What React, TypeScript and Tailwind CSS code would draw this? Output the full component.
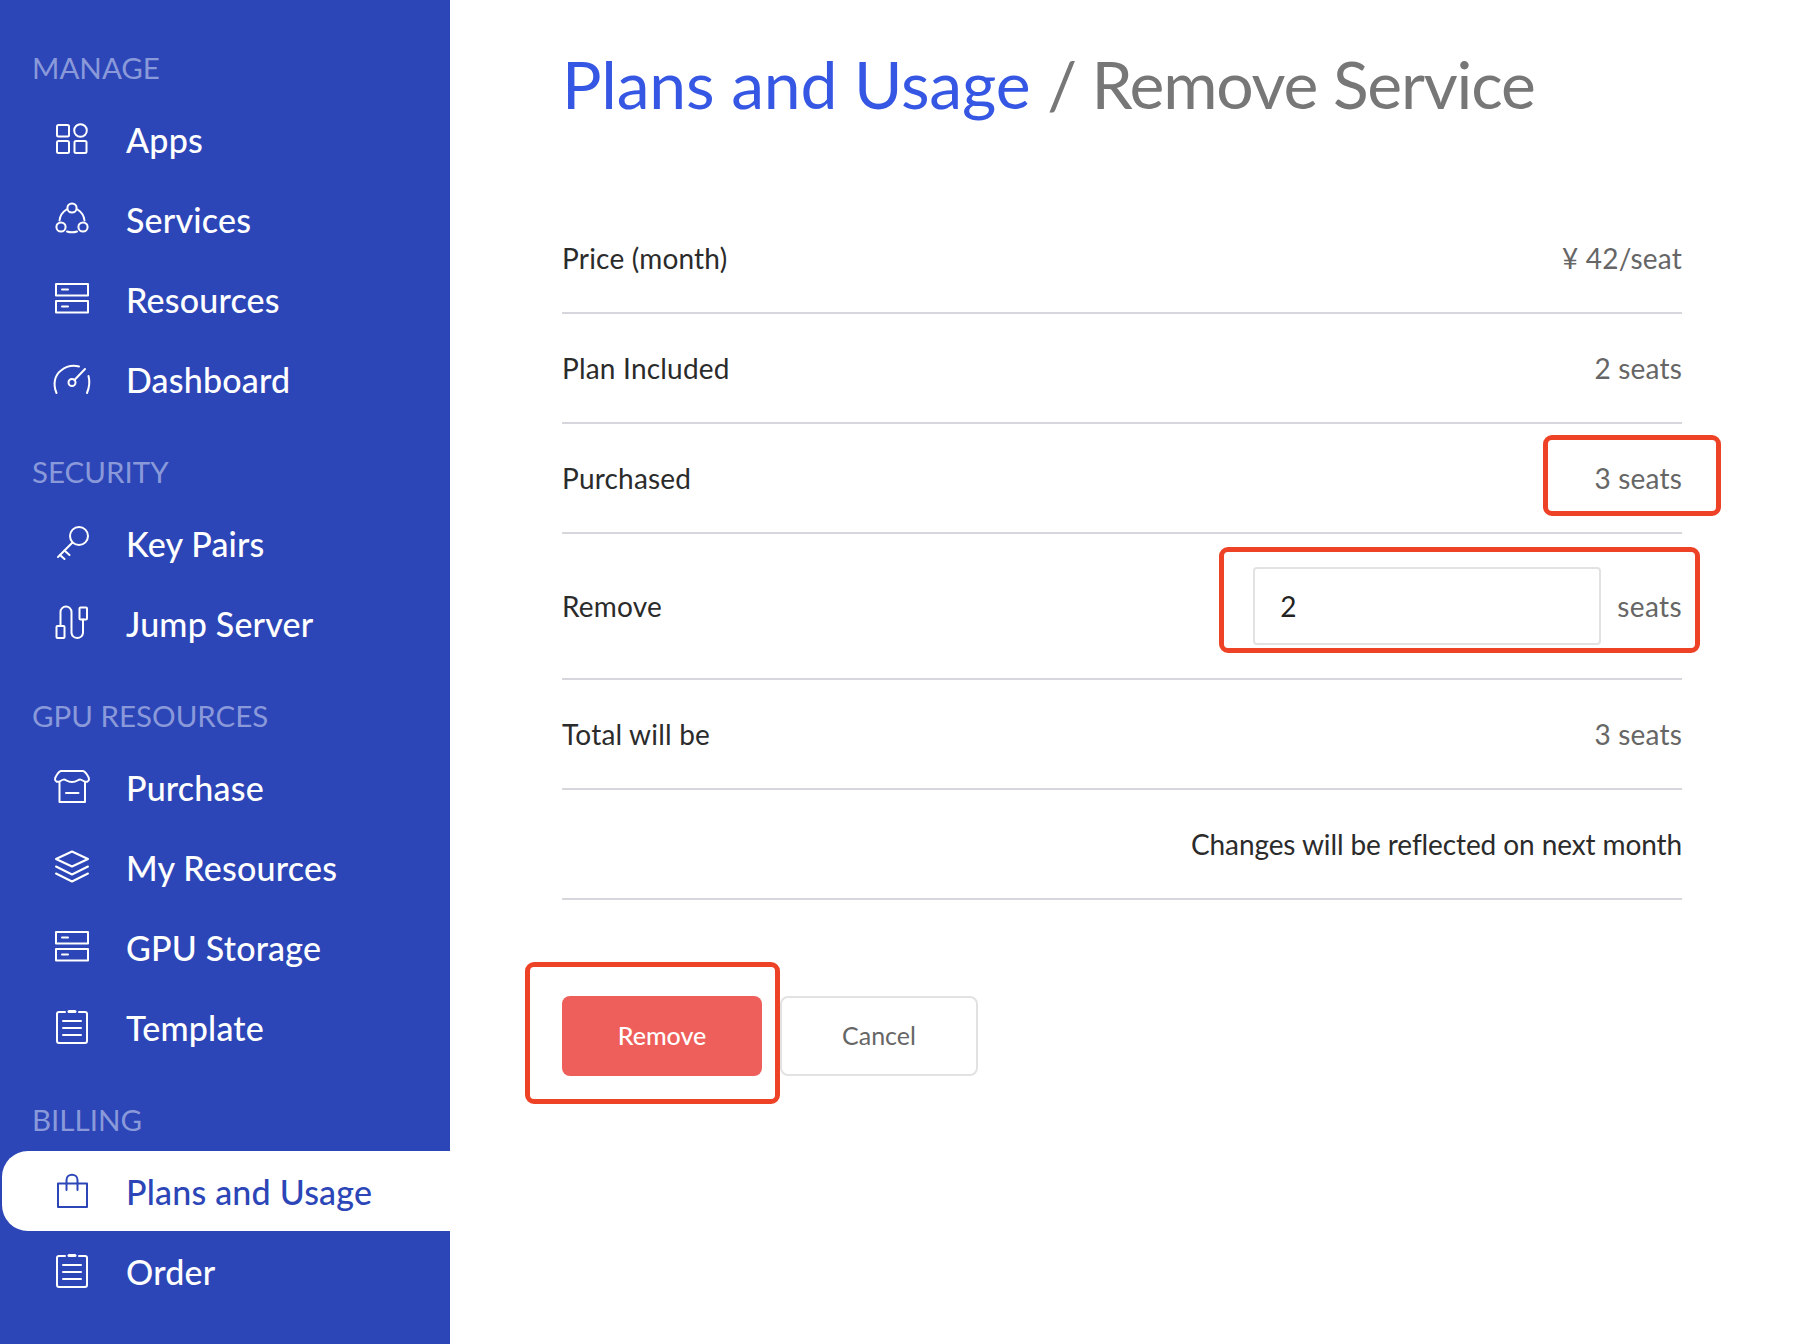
import { ReactNode } from "react";

const Icon = ({ children }: { children: ReactNode }) => (
  <svg
    width="40"
    height="40"
    viewBox="0 0 40 40"
    fill="none"
    stroke="currentColor"
    strokeWidth="2"
    strokeLinecap="round"
    strokeLinejoin="round"
  >
    {children}
  </svg>
);

const AppsIcon = () => (
  <Icon>
    <rect x="5" y="5" width="12" height="11.500" rx="1.500" />
    <circle cx="28.500" cy="10.500" r="6.300" />
    <rect x="5" y="21" width="12" height="12" rx="1.500" />
    <rect x="22.500" y="21" width="12" height="12" rx="1.500" />
  </Icon>
);

const ServicesIcon = () => (
  <Icon>
    <circle cx="20" cy="8" r="4.600" />
    <circle cx="9" cy="27" r="4.600" />
    <circle cx="31" cy="27" r="4.600" />
    <path d="M14.500 9.500C10.500 12 8 16 7.500 20.500" />
    <path d="M25.500 9.500C29.500 12 32 16 32.500 20.500" />
    <path d="M15 31.500C18 32.500 22 32.500 25 31.500" />
  </Icon>
);

const ServerIcon = () => (
  <Icon>
    <rect x="4" y="4" width="32" height="11.500" />
    <rect x="4" y="21" width="32" height="11.500" />
    <path d="M10 9.500H16" />
    <path d="M10 26.500H16" />
  </Icon>
);

const DashboardIcon = () => (
  <Icon>
    <path d="M4.500 33C0.500 24 3 15 9 10.500C14 6.500 21 5 27 6.500" />
    <path d="M35 33C37.500 27 38 21.500 36.500 16" />
    <circle cx="20" cy="22.500" r="3.500" />
    <path d="M22.500 20L33 9" />
  </Icon>
);

const KeyIcon = () => (
  <Icon>
    <circle cx="27" cy="12" r="9" />
    <path d="M20.500 18.500L6 33" />
    <path d="M12.500 26.500L17.500 31" />
    <path d="M8 31L12.500 35" />
  </Icon>
);

const JumpIcon = () => (
  <Icon>
    <rect x="4.500" y="22" width="8" height="12" rx="1" />
    <rect x="27.500" y="3.500" width="7.500" height="12" rx="1" />
    <path d="M8.500 22V8A5.500 5.500 0 0 1 19.500 8V29A5.800 5.800 0 0 0 31 29V15.500" />
  </Icon>
);

const StoreIcon = () => (
  <Icon>
    <path d="M9 3H31C33 3 37 9 37 11C37 14 34 14.500 31.500 13C29 11.500 28 11 25.500 12.500C22.500 14.500 17.500 14.500 14.500 12.500C12 11 11 11.500 8.500 13C6 14.500 3 14 3 11C3 9 7 3 9 3Z" />
    <path d="M7.500 14.500V34H33V14.500" />
    <path d="M14 25H26.500" />
  </Icon>
);

const LayersIcon = () => (
  <Icon>
    <path d="M20 3.500L36 11L20 18.500L4 11Z" />
    <path d="M4 18.500L20 26.500L36 18.500" />
    <path d="M4 25.500L20 33.500L36 25.500" />
  </Icon>
);

const ClipboardIcon = () => (
  <Icon>
    <path d="M13 4H7C6 4 5 5 5 6V33C5 34 6 35 7 35H33C34 35 35 34 35 33V6C35 5 34 4 33 4H27" />
    <path d="M17 3.500H23" strokeWidth="3" />
    <path d="M11 13H29" />
    <path d="M11 20H29" />
    <path d="M11 27H29" />
  </Icon>
);

const BagIcon = () => (
  <Icon>
    <rect x="6" y="11.500" width="29" height="23.500" />
    <path d="M14.500 18V8C14.500 1 25.500 1 25.500 8V18" />
  </Icon>
);

const sections = [
  {
    title: "MANAGE",
    items: [
      { label: "Apps", icon: <AppsIcon /> },
      { label: "Services", icon: <ServicesIcon /> },
      { label: "Resources", icon: <ServerIcon /> },
      { label: "Dashboard", icon: <DashboardIcon /> },
    ],
  },
  {
    title: "SECURITY",
    items: [
      { label: "Key Pairs", icon: <KeyIcon /> },
      { label: "Jump Server", icon: <JumpIcon /> },
    ],
  },
  {
    title: "GPU RESOURCES",
    items: [
      { label: "Purchase", icon: <StoreIcon /> },
      { label: "My Resources", icon: <LayersIcon /> },
      { label: "GPU Storage", icon: <ServerIcon /> },
      { label: "Template", icon: <ClipboardIcon /> },
    ],
  },
  {
    title: "BILLING",
    items: [
      { label: "Plans and Usage", icon: <BagIcon />, active: true },
      { label: "Order", icon: <ClipboardIcon /> },
    ],
  },
];

const rows = [
  { label: "Price (month)", value: "¥ 42/seat" },
  { label: "Plan Included", value: "2 seats" },
  { label: "Purchased", value: "3 seats" },
];

const Row = ({ label, value }: { label: string; value: string }) => (
  <div className="flex h-[110px] items-center justify-between border-b-2 border-[#d6d6dc]">
    <span className="tracking-[0.2px] text-[#2b2b2b]">{label}</span>
    <span className="tracking-[0.2px] text-[#666666]">{value}</span>
  </div>
);

const Sidebar = () => (
  <aside className="flex h-[1344px] w-[450px] shrink-0 flex-col gap-[37px] bg-[#2c46b7] pt-[52px]">
    {sections.map((section) => (
      <section key={section.title}>
        <h2 className="mb-[15px] h-8 pl-8 text-[29.5px] leading-8 text-[#8a99d9]">
          {section.title}
        </h2>
        {section.items.map((item) => (
          <a
            key={item.label}
            className={
              item.active
                ? "ml-0.5 flex h-20 items-center rounded-l-[26px] bg-white pl-[50px] text-[#2c46b7]"
                : "ml-0.5 flex h-20 items-center pl-[50px] text-white"
            }
          >
            <span className="flex w-[74px] shrink-0 pt-0.5">{item.icon}</span>
            <span className="text-[34px] font-medium tracking-[0.2px]">{item.label}</span>
          </a>
        ))}
      </section>
    ))}
  </aside>
);

export default function App() {
  return (
    <div className="flex min-h-[1344px] bg-white font-['Lato','Liberation_Sans',sans-serif]">
      <Sidebar />
      <main className="relative w-[1356px] pl-[112px] pr-[124px] pt-[38px]">
        <h1 className="h-[92px] text-[66px] leading-[92px] text-[#777777]">
          <span className="tracking-[-0.15px] text-[#3657e3]">Plans and Usage</span>{" "}
          <span className="tracking-[-1.2px]">/ Remove Service</span>
        </h1>
        <div className="mt-[74px] text-[28px]">
          {rows.map((row) => (
            <Row key={row.label} {...row} />
          ))}
          <div className="flex h-[146px] items-center justify-between border-b-2 border-[#d6d6dc]">
            <span className="tracking-[0.2px] text-[#2b2b2b]">Remove</span>
            <div className="flex items-center gap-4">
              <input
                readOnly
                value="2"
                className="h-[78px] w-[348px] rounded border-2 border-[#e2e2e2] pl-[25px] text-[#222222] outline-none"
              />
              <span className="tracking-[0.4px] text-[#666666]">seats</span>
            </div>
          </div>
          <Row label="Total will be" value="3 seats" />
          <div className="flex h-[110px] items-center justify-end border-b-2 border-[#d6d6dc] tracking-[-0.1px] text-[#2b2b2b]">
            Changes will be reflected on next month
          </div>
        </div>
        <div className="mt-[96px] flex gap-[18px] text-[25px]">
          <button className="h-20 w-[200px] rounded-lg bg-[#ee5e5a] font-medium text-white">Remove</button>
          <button className="h-20 w-[198px] rounded-lg border-2 border-[#e2e2e2] text-[#666666]">Cancel</button>
        </div>

        {/* red review marks drawn over the page */}
        <div className="absolute left-[1093px] top-[435px] h-[81px] w-[178px] rounded-[9px] border-[5px] border-[#ee4227]" />
        <div className="absolute left-[769px] top-[547px] h-[106px] w-[481px] rounded-[9px] border-[5px] border-[#ee4227]" />
        <div className="absolute left-[75px] top-[962px] h-[142px] w-[255px] rounded-[9px] border-[5px] border-[#ee4227]" />
      </main>
    </div>
  );
}
